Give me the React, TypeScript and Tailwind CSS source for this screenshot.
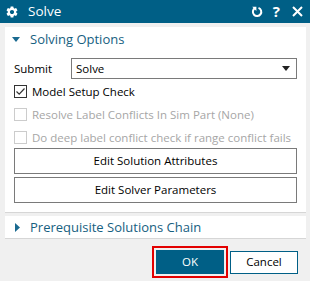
import React from "react";

const font = { fontFamily: '"Open Sans", "Noto Sans", sans-serif' };

function Gear() {
  return (
    <svg width="14" height="14" viewBox="0 0 24 24" fill="white">
      <path d="M19.14 12.94c.04-.3.06-.61.06-.94 0-.32-.02-.64-.07-.94l2.03-1.58a.49.49 0 0 0 .12-.61l-1.92-3.32a.488.488 0 0 0-.59-.22l-2.39.96c-.5-.38-1.03-.7-1.62-.94l-.36-2.54a.484.484 0 0 0-.48-.41h-3.84c-.24 0-.43.17-.47.41l-.36 2.54c-.59.24-1.13.57-1.62.94l-2.39-.96c-.22-.08-.47 0-.59.22L2.74 8.87c-.12.21-.08.47.12.61l2.03 1.58c-.05.3-.09.63-.09.94s.02.64.07.94l-2.03 1.58a.49.49 0 0 0-.12.61l1.92 3.32c.12.22.37.29.59.22l2.39-.96c.5.38 1.03.7 1.62.94l.36 2.54c.05.24.24.41.48.41h3.84c.24 0 .44-.17.47-.41l.36-2.54c.59-.24 1.13-.56 1.62-.94l2.39.96c.22.08.47 0 .59-.22l1.92-3.32c.12-.22.07-.47-.12-.61l-2.01-1.58zM12 15.6c-1.98 0-3.6-1.62-3.6-3.6s1.62-3.6 3.6-3.6 3.6 1.62 3.6 3.6-1.62 3.6-3.6 3.6z" />
    </svg>
  );
}

function Refresh() {
  return (
    <svg width="12" height="12" viewBox="0 0 12 12" fill="none">
      <path d="M4 2.2 A4.2 4.2 0 1 0 7.5 1.9" stroke="white" strokeWidth="2" fill="none" />
      <path d="M1.2 0.8 L5.4 0.8 L5.4 5 Z" fill="white" />
    </svg>
  );
}

function Close() {
  return (
    <svg width="11" height="11" viewBox="0 0 11 11">
      <path d="M1 1 L10 10 M10 1 L1 10" stroke="white" strokeWidth="2" />
    </svg>
  );
}

function CheckBox({ checked, disabled }: { checked?: boolean; disabled?: boolean }) {
  return (
    <div
      className={`w-[13px] h-[13px] border ${disabled ? "border-[#cccccc]" : "border-[#333333]"} bg-white flex items-center justify-center`}
    >
      {checked && (
        <svg width="11" height="11" viewBox="0 0 11 11">
          <path d="M1.5 5.5 L4.2 8.2 L9.5 2.5" stroke="#333" strokeWidth="1.2" fill="none" />
        </svg>
      )}
    </div>
  );
}

export default function App() {
  return (
    <div className="w-[310px] h-[281px] bg-[#f0f0f0] flex flex-col overflow-hidden" style={font}>
      <div className="h-[23px] bg-[#005f86] flex items-center pl-[5px] pr-[7px] shrink-0">
        <Gear />
        <span className="ml-[9px] text-white text-[13.5px] leading-none">Solve</span>
        <div className="ml-auto flex items-center">
          <Refresh />
          <span className="ml-[10px] text-white text-[15px] font-bold leading-none">?</span>
          <span className="ml-[12px] flex">
            <Close />
          </span>
        </div>
      </div>

      <div className="mt-[4px] ml-[5px] mr-[4px] bg-white border-b border-[#d6d6d6] flex flex-col">
        <div className="h-[25px] flex items-center pl-[7px]">
          <svg width="8" height="5" viewBox="0 0 8 5">
            <path d="M0 0 L8 0 L4 5 Z" fill="#1a6a90" />
          </svg>
          <span className="ml-[10px] text-[13px] text-[#16607f] leading-none">Solving Options</span>
        </div>
        <div className="flex items-center mt-[6px] h-[21px]">
          <span className="ml-[9px] w-[57px] text-[11.5px] text-black">Submit</span>
          <div className="w-[226px] h-[21px] border border-[#7a7a7a] flex items-center pl-[4px] pr-[6px]">
            <span className="text-[11.5px] text-black">Solve</span>
            <svg className="ml-auto" width="8" height="5" viewBox="0 0 8 5">
              <path d="M0 0 L8 0 L4 5 Z" fill="#222" />
            </svg>
          </div>
        </div>
        <div className="flex flex-col pl-[9px]">
          <div className="h-[23px] flex items-center mt-[1px]">
            <CheckBox checked />
            <span className="ml-[5px] text-[11.5px] text-black">Model Setup Check</span>
          </div>
          <div className="h-[23px] flex items-center">
            <CheckBox disabled />
            <span className="ml-[5px] text-[11.5px] text-[#a6a6a6]">Resolve Label Conflicts In Sim Part (None)</span>
          </div>
          <div className="h-[23px] flex items-center">
            <CheckBox disabled />
            <span className="ml-[5px] text-[11.5px] text-[#a6a6a6]">Do deep label conflict check if range conflict fails</span>
          </div>
        </div>
        <div className="flex flex-col gap-[3px] px-[9px] -mt-[1px] pb-[9px]">
          <div className="h-[26px] border border-[#7a7a7a] flex items-center justify-center text-[11.5px] text-black">
            Edit Solution Attributes
          </div>
          <div className="h-[26px] border border-[#7a7a7a] flex items-center justify-center text-[11.5px] text-black">
            Edit Solver Parameters
          </div>
        </div>
      </div>

      <div className="mt-[3px] ml-[5px] mr-[4px] h-[23px] bg-white border-b border-[#d6d6d6] flex items-center pl-[10px]">
        <svg width="5" height="9" viewBox="0 0 5 9">
          <path d="M0 0 L5 4.5 L0 9 Z" fill="#1a6a90" />
        </svg>
        <span className="ml-[10px] text-[13px] text-[#16607f] leading-none">Prerequisite Solutions Chain</span>
      </div>

      <div className="flex justify-end items-center mt-[7px] pr-[12px]">
        <div className="border-2 border-[#e30000] p-[2px] w-[76px] h-[32px]">
          <div className="w-full h-full bg-[#005f86] flex items-center justify-center text-white text-[11.5px]">OK</div>
        </div>
        <div className="ml-[2px] w-[68px] h-[23px] border border-[#005f86] bg-white flex items-center justify-center text-[11.5px] text-black">
          Cancel
        </div>
      </div>
    </div>
  );
}
